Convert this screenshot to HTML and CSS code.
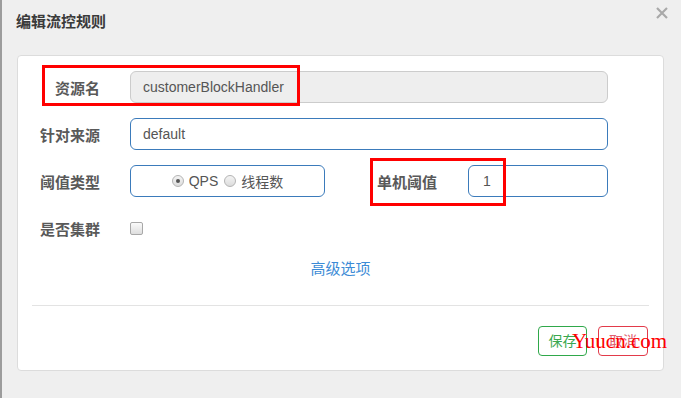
FILE: index.html
```html
<!DOCTYPE html>
<html lang="zh-CN">
<head>
    <meta charset="UTF-8">
    <title>编辑流控规则</title>
    <link rel="stylesheet" href="styles.css">
</head>
<body>
<div class="dialog">
    <div class="dialog-header">
        <span class="dialog-title">编辑流控规则</span>
        <svg class="close" width="12" height="12" viewBox="0 0 12 12">
            <path d="M1 1 L11 11 M11 1 L1 11" stroke="#a9a9a9" stroke-width="2.2" fill="none"/>
        </svg>
    </div>

    <div class="card">
        <div class="row">
            <label class="label">资源名</label>
            <div class="input disabled">customerBlockHandler</div>
        </div>
        <div class="row">
            <label class="label">针对来源</label>
            <div class="input">default</div>
        </div>
        <div class="row">
            <label class="label">阈值类型</label>
            <div class="radio-box">
                <span class="radio checked"></span><span class="radio-text">QPS</span>
                <span class="radio"></span><span class="radio-text">线程数</span>
            </div>
            <label class="label-inline">单机阈值</label>
            <div class="input small">1</div>
        </div>
        <div class="row">
            <label class="label">是否集群</label>
            <span class="checkbox"></span>
        </div>

        <div class="more">高级选项</div>
        <div class="divider"></div>

        <div class="actions">
            <span class="btn btn-save">保存</span>
            <span class="btn btn-cancel">取消</span>
        </div>
    </div>
</div>

<!-- 标注框和水印 -->
<div class="mark mark1"></div>
<div class="mark mark2"></div>
<div class="watermark">Yuucn.com</div>
</body>
</html>
```

FILE: styles.css
```css
* {
    margin: 0;
    padding: 0;
    box-sizing: border-box;
}

body {
    position: relative;
    width: 681px;
    height: 398px;
    overflow: hidden;
    font-family: "Liberation Sans", "Noto Sans CJK SC", sans-serif;
    background: #efefef;
}

.dialog {
    position: relative;
    width: 681px;
    height: 398px;
    background: #efefef;
    border-left: 2px solid #9c9c9c;
}

.dialog-header {
    height: 55px;
    padding: 12px 0 0 14px;
}

.dialog-title {
    font-size: 15px;
    line-height: 20px;
    font-weight: bold;
    color: #3a3a3a;
}

.close {
    position: absolute;
    top: 7px;
    right: 13px;
}

.card {
    width: 647px;
    margin-left: 15px;
    padding: 15px 0 14px;
    background: #fff;
    border: 1px solid #dcdcdc;
    border-radius: 4px;
}

.row {
    display: flex;
    align-items: center;
    height: 32px;
    margin-bottom: 15px;
}

.label {
    width: 82px;
    margin-right: 30px;
    text-align: right;
    font-size: 15px;
    font-weight: bold;
    color: #595959;
}

.label-inline {
    width: 91px;
    margin-left: 52px;
    font-size: 15px;
    font-weight: bold;
    color: #595959;
}

.input {
    width: 478px;
    height: 32px;
    padding: 0 12px;
    line-height: 30px;
    font-size: 14px;
    color: #555;
    border: 1px solid #3b7bbb;
    border-radius: 6px;
    background: #fff;
}

.input.disabled {
    background: #eee;
    border-color: #ccc;
}

.input.small {
    width: 140px;
    padding: 0 14px;
}

.radio-box {
    display: flex;
    align-items: center;
    justify-content: center;
    width: 195px;
    height: 32px;
    border: 1px solid #3b7bbb;
    border-radius: 6px;
    font-size: 14px;
    color: #555;
}

.radio {
    position: relative;
    width: 12px;
    height: 12px;
    margin-right: 5px;
    border: 1px solid #b4b4b4;
    border-radius: 50%;
    background: linear-gradient(#f4f4f4, #dcdcdc);
}

.radio.checked::after {
    content: "";
    position: absolute;
    top: 3px;
    left: 3px;
    width: 4px;
    height: 4px;
    border-radius: 50%;
    background: #555;
}

.radio-text {
    margin-right: 6px;
}

.radio-text:last-child {
    margin-right: 0;
}

.checkbox {
    width: 13px;
    height: 13px;
    border: 1px solid #a8a8a8;
    border-radius: 2px;
    background: linear-gradient(#fafafa, #dedede);
}

.more {
    height: 20px;
    line-height: 20px;
    text-align: center;
    font-size: 15px;
    color: #3c8bd6;
}

.divider {
    margin: 26px 14px 0;
    border-top: 1px solid #e3e3e3;
}

.actions {
    display: flex;
    justify-content: flex-end;
    gap: 11px;
    margin: 20px 15px 0 0;
}

.btn {
    width: 49px;
    height: 30px;
    line-height: 28px;
    text-align: center;
    font-size: 14px;
    border: 1px solid;
    border-radius: 4px;
    background: #fff;
}

.btn-save {
    color: #3aa84f;
    border-color: #2fa84a;
}

.btn-cancel {
    width: 50px;
    color: #e06070;
    border-color: #e23a4a;
}

.mark {
    position: absolute;
    border: 3px solid #f00;
}

.mark1 {
    left: 42px;
    top: 65px;
    width: 258px;
    height: 41px;
}

.mark2 {
    left: 370px;
    top: 158px;
    width: 136px;
    height: 48px;
}

.watermark {
    position: absolute;
    left: 572px;
    top: 331px;
    font-family: "Liberation Serif", serif;
    font-size: 21px;
    line-height: 21px;
    color: #f00;
}
```
